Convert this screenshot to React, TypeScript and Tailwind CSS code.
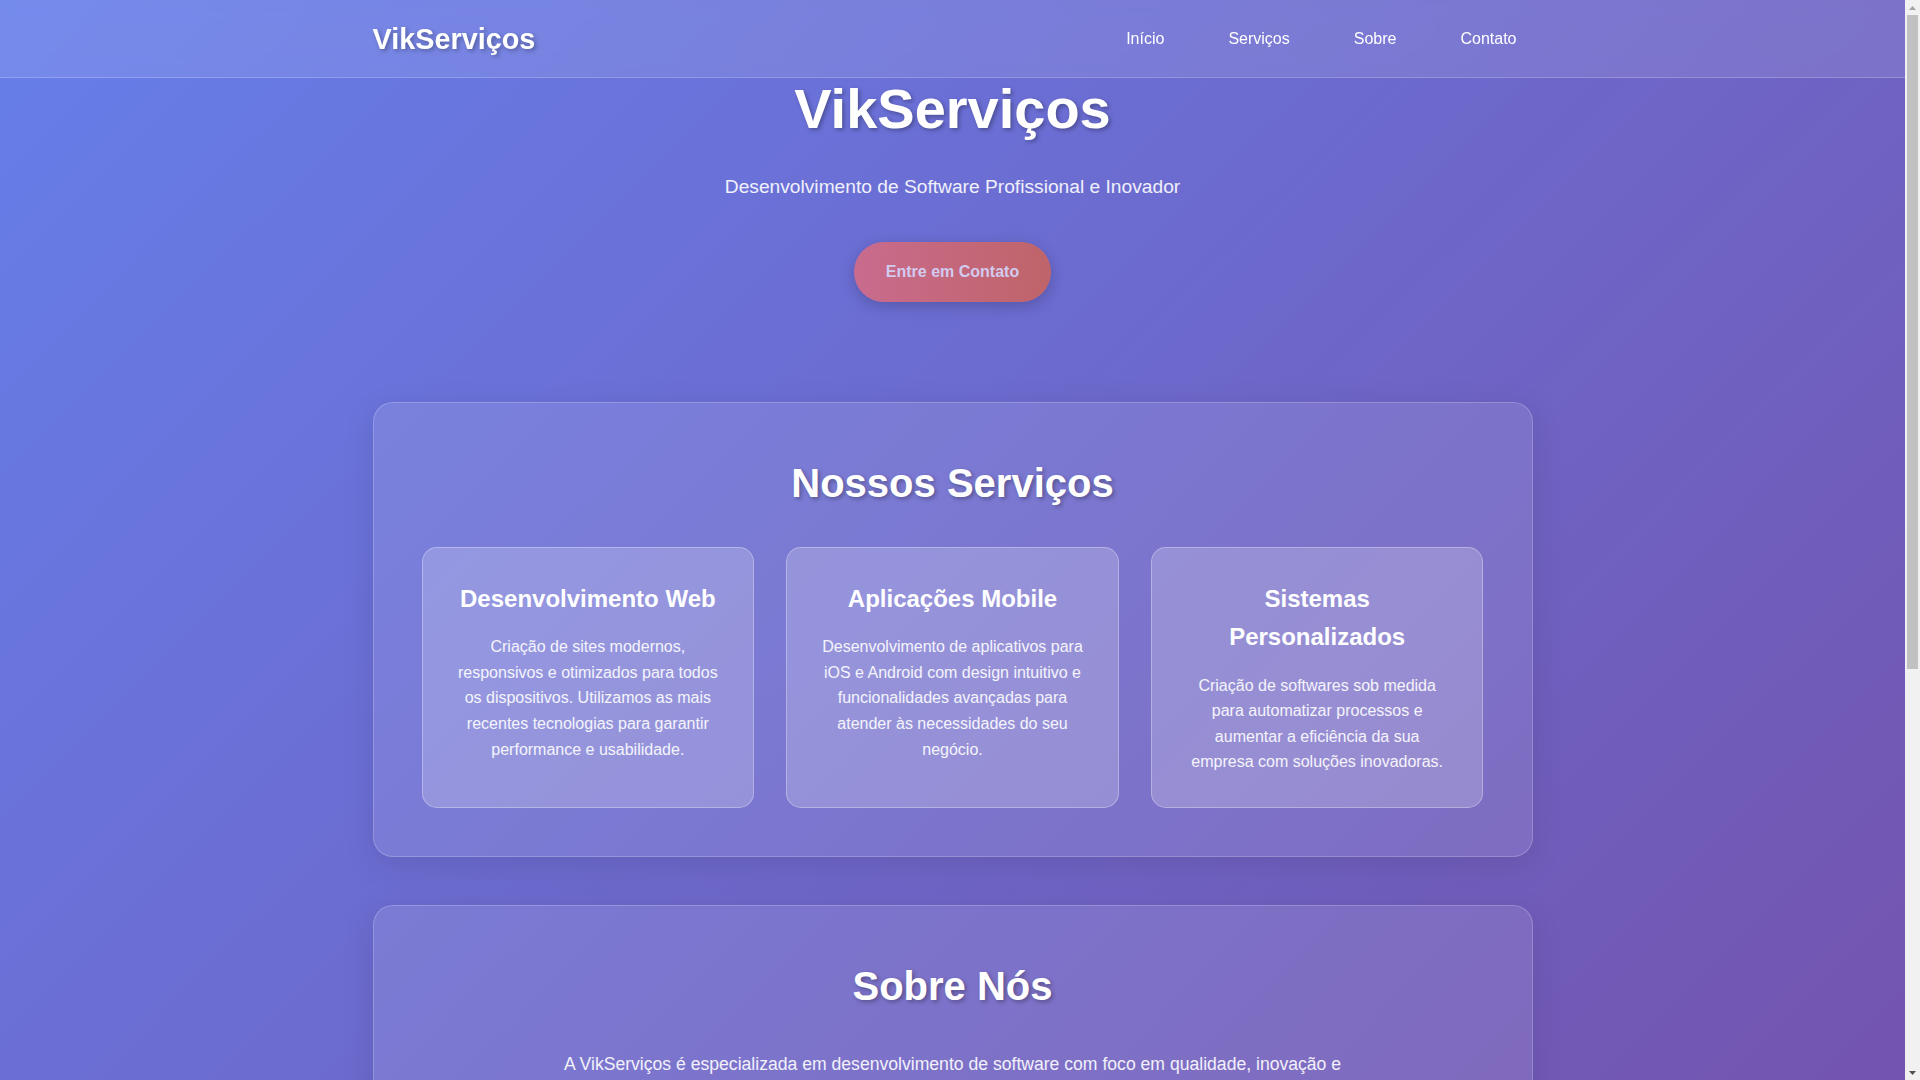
import React from 'react';

const navLinks = ['Início', 'Serviços', 'Sobre', 'Contato'];

const services = [
  {
    title: 'Desenvolvimento Web',
    text: 'Criação de sites modernos, responsivos e otimizados para todos os dispositivos. Utilizamos as mais recentes tecnologias para garantir performance e usabilidade.',
  },
  {
    title: 'Aplicações Mobile',
    text: 'Desenvolvimento de aplicativos para iOS e Android com design intuitivo e funcionalidades avançadas para atender às necessidades do seu negócio.',
  },
  {
    title: 'Sistemas Personalizados',
    text: 'Criação de softwares sob medida para automatizar processos e aumentar a eficiência da sua empresa com soluções inovadoras.',
  },
];

const shadowText = '[text-shadow:2px_2px_4px_rgba(0,0,0,0.3)]';

const Header: React.FC = () => (
  <header className="fixed top-0 left-0 right-[15px] z-20 h-[78px] border-b border-white/20 bg-white/10 backdrop-blur-[10px]">
    <div className="mx-auto flex h-full max-w-[1200px] items-center justify-between px-5 pt-[1px]">
      <div className={`text-[28.8px] font-bold text-white ${shadowText}`}>VikServiços</div>
      <nav>
        <ul className="flex gap-8">
          {navLinks.map(link => (
            <li key={link}>
              <a href="#" className="block rounded-[25px] px-4 py-2 text-[16px] text-white">
                {link}
              </a>
            </li>
          ))}
        </ul>
      </nav>
    </div>
  </header>
);

// classic browser scrollbar as it appears in the reference
const ScrollBar: React.FC = () => (
  <div className="fixed top-0 right-0 z-30 flex h-screen w-[15px] flex-col bg-[#f1f1f1]">
    <div className="flex h-[15px] items-center justify-center">
      <svg width="7" height="4" viewBox="0 0 7 4">
        <path d="M0 4 L3.5 0 L7 4 Z" fill="#a3a3a3" />
      </svg>
    </div>
    <div className="mx-[2px] h-[654px] bg-[#c1c1c1]" />
    <div className="flex-1" />
    <div className="flex h-[15px] items-center justify-center">
      <svg width="7" height="4" viewBox="0 0 7 4">
        <path d="M0 0 L7 0 L3.5 4 Z" fill="#505050" />
      </svg>
    </div>
  </div>
);

const Section: React.FC<{ title: string; children: React.ReactNode }> = ({ title, children }) => (
  <section className="mb-12 rounded-[20px] border border-white/20 bg-white/10 p-12 shadow-[0_8px_32px_rgba(0,0,0,0.1)]">
    <h2 className={`mb-8 text-center text-[40px] font-bold text-white ${shadowText}`}>{title}</h2>
    {children}
  </section>
);

export default function App() {
  return (
    <div
      className="min-h-screen w-[calc(100%-15px)] bg-[linear-gradient(135deg,#667eea_0%,#764ba2_100%)] leading-[1.6] text-white"
      style={{ fontFamily: '"Liberation Sans", Arial, sans-serif' }}
    >
      <Header />
      <ScrollBar />

      {/* Hero */}
      <div className="mx-auto max-w-[1200px] px-5 pt-[64px] pb-[100px] text-center">
        <h1 className={`mb-[18px] text-[56px] font-bold text-white ${shadowText}`}>VikServiços</h1>
        <p className="mb-10 text-[19.2px] text-white/90">Desenvolvimento de Software Profissional e Inovador</p>
        <div className="flex justify-center">
          <a
            href="#"
            className="rounded-full bg-[linear-gradient(90deg,#c96b8e,#bf6469)] px-8 py-[17px] text-[16px] font-bold text-[#d2cbef] shadow-[0_4px_15px_rgba(0,0,0,0.2)]"
          >
            Entre em Contato
          </a>
        </div>
      </div>

      <main className="mx-auto max-w-[1200px] px-5">
        <Section title="Nossos Serviços">
          <div className="grid grid-cols-3 gap-8">
            {services.map(s => (
              <div
                key={s.title}
                className="rounded-[15px] border border-white/30 bg-white/20 p-8 text-center"
              >
                <h3 className="mb-4 text-[24px] font-bold text-white">{s.title}</h3>
                <p className="text-[16px] text-white/90">{s.text}</p>
              </div>
            ))}
          </div>
        </Section>

        <Section title="Sobre Nós">
          <div className="mx-auto max-w-[800px] text-center text-[17.6px] text-white/90">
            <p className="mb-4">
              A VikServiços é especializada em desenvolvimento de software com foco em qualidade, inovação e
              satisfação do cliente. Transformamos ideias em soluções digitais eficientes.
            </p>
            <p>
              Nossa equipe trabalha com as tecnologias mais modernas do mercado para entregar projetos que
              impulsionam o crescimento do seu negócio.
            </p>
          </div>
        </Section>

        <Section title="Contato">
          <div className="mx-auto max-w-[800px] text-center text-[17.6px] text-white/90">
            <p className="mb-4">Entre em contato conosco para discutir seu próximo projeto.</p>
            <p>Email: contato@vikservicos.com.br</p>
            <p>Telefone: (11) 99999-9999</p>
            <p>WhatsApp: (11) 99999-9999</p>
          </div>
        </Section>
      </main>

      <footer className="border-t border-white/20 bg-white/10 py-8 text-center text-white/80">
        <p>© 2024 VikServiços. Todos os direitos reservados.</p>
      </footer>
    </div>
  );
}
